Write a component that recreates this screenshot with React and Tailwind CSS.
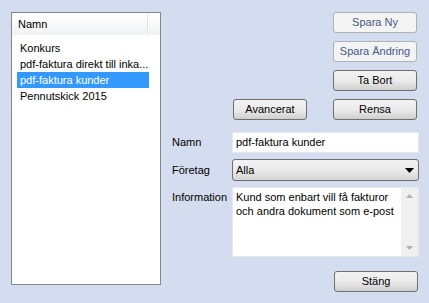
import React from "react"

function WinButton({ children, disabled, className = "" }) {
  return (
    <button
      type="button"
      disabled={disabled}
      className={`h-[21px] rounded-[3px] border text-[11px] leading-none ${
        disabled
          ? "border-[#adb2b5] bg-[#f4f4f4] text-[#44588a]"
          : "border-[#707070] bg-gradient-to-b from-[#f2f2f2] via-[#ebebeb] to-[#cfcfcf] text-black"
      } ${className}`}
    >
      {children}
    </button>
  )
}

export default function App() {
  const items = ["Konkurs", "pdf-faktura direkt till inka...", "pdf-faktura kunder", "Pennutskick 2015"]

  return (
    <div className="flex h-[303px] w-[429px] bg-[#d4dcef] pl-[11px] pt-[12px] font-['Liberation_Sans',Arial,sans-serif] text-[11px] text-black">
      {/* list */}
      <div className="h-[273px] w-[150px] border border-[#828790] bg-white">
        <div className="flex h-[22px] bg-gradient-to-b from-white to-[#f1f2f4]">
          <div className="flex w-[136px] items-center border-r border-[#e5e5e5] pl-[6px]">Namn</div>
          <div className="flex-1 border-l border-white" />
        </div>
        <div className="pt-[5px]">
          {items.map((item, i) => (
            <div
              key={item}
              className={`mx-[5px] flex h-[16px] w-[132px] items-center whitespace-nowrap pl-[3px] ${
                i === 2 ? "bg-[#3399ff] text-white" : ""
              }`}
            >
              {item}
            </div>
          ))}
        </div>
      </div>

      {/* right side */}
      <div className="flex flex-col pl-[11px]">
        <div className="flex flex-col items-end gap-[8px] pr-[2px]">
          <WinButton disabled className="w-[84px]">Spara Ny</WinButton>
          <WinButton disabled className="w-[84px]">Spara Ändring</WinButton>
          <WinButton className="w-[84px]">Ta Bort</WinButton>
          <div className="flex w-[245px] justify-between pl-[61px]">
            <WinButton className="w-[74px]">Avancerat</WinButton>
            <WinButton className="w-[84px]">Rensa</WinButton>
          </div>
        </div>

        <div className="mt-[12px] flex flex-col gap-[6px]">
          <div className="flex items-center">
            <span className="w-[60px]">Namn</span>
            <div className="flex h-[21px] w-[187px] items-center border border-[#e3e9ef] bg-white pl-[3px]">
              pdf-faktura kunder
            </div>
          </div>
          <div className="flex items-center">
            <span className="w-[60px]">Företag</span>
            <div className="flex h-[22px] w-[187px] items-center justify-between rounded-[3px] border border-[#707070] bg-gradient-to-b from-[#f2f2f2] via-[#ebebeb] to-[#d5d5d5] pl-[3px] pr-[4px]">
              <span>Alla</span>
              <svg width="9" height="5" viewBox="0 0 9 5">
                <path d="M0 0h9L4.5 5z" fill="#000" />
              </svg>
            </div>
          </div>
          <div className="flex items-start">
            <span className="w-[60px] pt-[2px]">Information</span>
            <div className="flex h-[70px] w-[187px] border border-[#e3e9ef] bg-white">
              <div className="flex-1 pl-[3px] pt-[2px] leading-[14px]">
                Kund som enbart vill få fakturor och andra dokument som e-post
              </div>
              <div className="flex w-[17px] flex-col items-center justify-between bg-[#f0f0f0] py-[6px]">
                <svg width="7" height="4" viewBox="0 0 7 4">
                  <path d="M3.5 0L7 4H0z" fill="#b0b0b0" />
                </svg>
                <svg width="7" height="4" viewBox="0 0 7 4">
                  <path d="M0 0h7L3.5 4z" fill="#b0b0b0" />
                </svg>
              </div>
            </div>
          </div>
        </div>

        <div className="mt-[14px] flex justify-end pr-[1px]">
          <WinButton className="w-[84px]">Stäng</WinButton>
        </div>
      </div>
    </div>
  )
}
